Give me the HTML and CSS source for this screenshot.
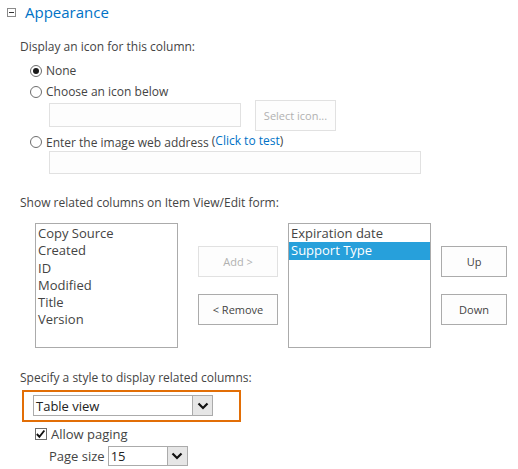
FILE: index.html
```html
<!DOCTYPE html>
<html>
<head>
<meta charset="utf-8">
<link rel="stylesheet" href="styles.css">
</head>
<body>
<div class="page">
  <div class="head">
    <span class="toggle"><span class="minus"></span></span>
    <span class="title">Appearance</span>
  </div>

  <div class="label l1">Display an icon for this column:</div>
  <div class="opts">
    <div class="opt"><span class="radio on"></span><span>None</span></div>
    <div class="opt"><span class="radio"></span><span>Choose an icon below</span></div>
    <div class="row1">
      <div class="input in1"></div>
      <div class="btn disabled selicon">Select icon...</div>
    </div>
    <div class="opt opt3"><span class="radio"></span><span>Enter the image web address <span class="test">(<span class="link">Click to test</span>)</span></span></div>
    <div class="input in2"></div>
  </div>

  <div class="label l2">Show related columns on Item View/Edit form:</div>
  <div class="cols">
    <div class="list">
      <div class="item">Copy Source</div>
      <div class="item">Created</div>
      <div class="item">ID</div>
      <div class="item">Modified</div>
      <div class="item">Title</div>
      <div class="item">Version</div>
    </div>
    <div class="btncol mid">
      <div class="btn disabled">Add &gt;</div>
      <div class="btn">&lt; Remove</div>
    </div>
    <div class="list">
      <div class="item">Expiration date</div>
      <div class="item selected">Support Type</div>
    </div>
    <div class="btncol side">
      <div class="btn">Up</div>
      <div class="btn">Down</div>
    </div>
  </div>

  <div class="label l3">Specify a style to display related columns:</div>
  <div class="focusbox">
    <div class="select wide">
      <span class="val">Table view</span>
      <span class="arrow"><svg width="12" height="8" viewBox="0 0 12 8"><path d="M1.5 1.5 L6 6 L10.5 1.5" fill="none" stroke="#111" stroke-width="2.2"/></svg></span>
    </div>
  </div>
  <div class="check">
    <span class="cb"><svg width="12" height="12" viewBox="0 0 12 12"><path d="M2 6 L4.8 9 L10.2 2.2" fill="none" stroke="#111" stroke-width="2"/></svg></span>
    <span>Allow paging</span>
  </div>
  <div class="pagesize">
    <span class="pslabel">Page size</span>
    <div class="select small">
      <span class="val">15</span>
      <span class="arrow"><svg width="12" height="8" viewBox="0 0 12 8"><path d="M1.5 1.5 L6 6 L10.5 1.5" fill="none" stroke="#111" stroke-width="2.2"/></svg></span>
    </div>
  </div>
</div>
</body>
</html>
```

FILE: styles.css
```css
html, body {
  margin: 0;
  padding: 0;
  background: #ffffff;
}
body {
  width: 518px;
  height: 469px;
  overflow: hidden;
  font-family: "Open Sans", "Noto Sans", "Liberation Sans", sans-serif;
  font-size: 12px;
  color: #444444;
}
.head {
  display: flex;
  align-items: center;
  height: 24px;
  padding-left: 7px;
}
.toggle {
  width: 9px;
  height: 9px;
  box-sizing: border-box;
  border: 1px solid #8a8a8a;
  display: flex;
  align-items: center;
  justify-content: center;
  margin-right: 9px;
  margin-top: 1px;
}
.minus {
  width: 5px;
  height: 1px;
  background: #333;
}
.title {
  font-size: 15px;
  color: #0072c6;
  line-height: 24px;
}
.label {
  padding-left: 20px;
  height: 18px;
  line-height: 18px;
}
.l1 { margin-top: 14px; }
.l2 { margin-top: 20px; }
.l3 { margin-top: 21px; }
.opts {
  padding-left: 30px;
  margin-top: 4px;
}
.opt {
  display: flex;
  align-items: center;
  height: 21px;
  line-height: 21px;
}
.radio {
  width: 12px;
  height: 12px;
  box-sizing: border-box;
  border: 1px solid #6d6d6d;
  border-radius: 50%;
  margin-right: 4px;
  display: flex;
  align-items: center;
  justify-content: center;
}
.radio.on::after {
  content: "";
  width: 6px;
  height: 6px;
  border-radius: 50%;
  background: #1a1a1a;
}
.row1 {
  display: flex;
  margin-top: -2px;
  padding-left: 19px;
  height: 28px;
}
.input {
  box-sizing: border-box;
  border: 1px solid #e1e1e1;
  background: #fdfdfd;
}
.in1 {
  width: 192px;
  height: 24px;
  margin-top: 3px;
}
.selicon {
  margin-left: 14px;
  width: 81px;
  height: 28px;
  font-size: 11px;
}
.opt3 {
  margin-top: 5px;
  height: 18px;
}
.test {
  position: relative;
  top: -2px;
}
.link { color: #0072c6; }
.in2 {
  margin-left: 19px;
  width: 372px;
  height: 23px;
}
.cols {
  display: flex;
  margin-top: 11px;
  padding-left: 35px;
  height: 125px;
}
.list {
  width: 143px;
  height: 125px;
  box-sizing: border-box;
  border: 1px solid #ababab;
  padding-top: 1px;
  font-size: 13px;
  color: #444;
}
.item {
  height: 17.3px;
  line-height: 17.3px;
  padding-left: 2px;
  white-space: nowrap;
}
.item.selected {
  background: #27a0db;
  color: #ffffff;
}
.btncol {
  display: flex;
  flex-direction: column;
  gap: 17px;
  padding-top: 23px;
}
.btncol.mid {
  width: 80px;
  margin: 0 10px 0 20px;
}
.btncol.side {
  width: 66px;
  margin-left: 10px;
}
.btn {
  box-sizing: border-box;
  height: 31px;
  border: 1px solid #ababab;
  background: #fdfdfd;
  display: flex;
  align-items: center;
  justify-content: center;
  font-size: 11px;
  color: #444;
}
.btn.disabled {
  border-color: #e1e1e1;
  color: #b1b1b1;
}
.focusbox {
  margin: 3px 0 0 22px;
  width: 219px;
  height: 32px;
  box-sizing: border-box;
  border: 2px solid #e26e06;
  padding: 3px 0 0 9px;
}
.select {
  box-sizing: border-box;
  border: 1px solid #ababab;
  background: #fff;
  display: flex;
  align-items: stretch;
  font-size: 13px;
  color: #222;
}
.select .val {
  flex: 1;
  padding-left: 2px;
  display: flex;
  align-items: center;
}
.select .arrow {
  width: 19px;
  background: #e6e6e6;
  border-left: 1px solid #ababab;
  display: flex;
  align-items: center;
  justify-content: center;
}
.select.wide {
  width: 180px;
  height: 21px;
}
.check {
  display: flex;
  align-items: center;
  height: 18px;
  margin-top: 3px;
  padding-left: 35px;
  font-size: 13px;
}
.cb {
  width: 12px;
  height: 12px;
  box-sizing: border-box;
  border: 1px solid #6d6d6d;
  margin-right: 4px;
  display: flex;
}
.cb svg { margin: -1px 0 0 -1px; }
.pagesize {
  display: flex;
  align-items: center;
  padding-left: 49px;
  margin-top: 2px;
  height: 21px;
  font-size: 13px;
}
.pslabel { margin-right: 3px; }
.select.small {
  width: 80px;
  height: 20px;
}
```
